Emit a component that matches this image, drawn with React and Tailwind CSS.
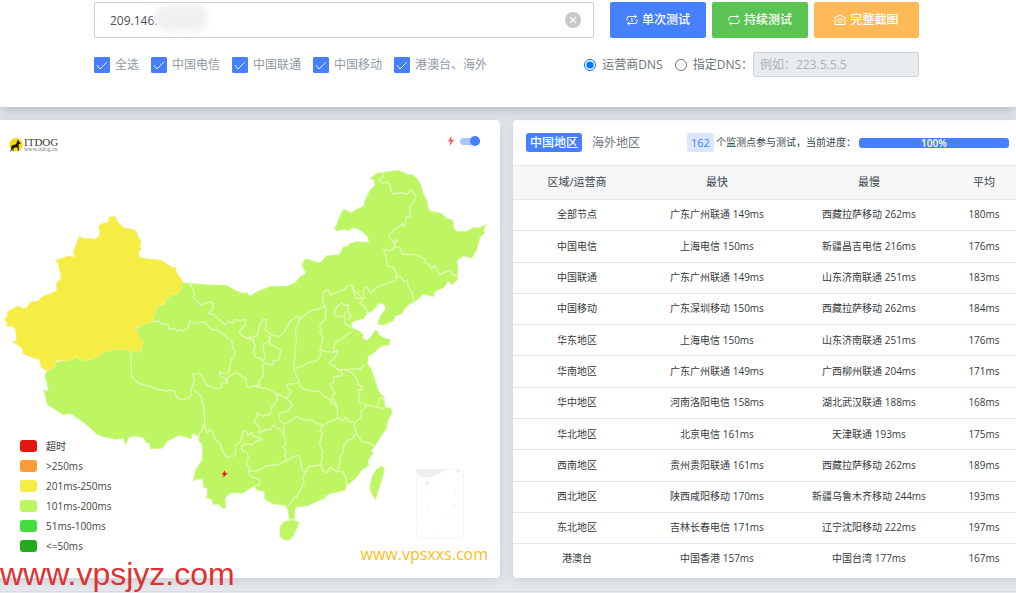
import React, { useState } from 'react';

const carriers = ['全选', '中国电信', '中国联通', '中国移动', '港澳台、海外'];

const legend = [
  { label: '超时', color: 'bg-[#e61610]' },
  { label: '>250ms', color: 'bg-[#f99b37]' },
  { label: '201ms-250ms', color: 'bg-[#f6ed44]' },
  { label: '101ms-200ms', color: 'bg-[#bef663]' },
  { label: '51ms-100ms', color: 'bg-[#42dd3f]' },
  { label: '<=50ms', color: 'bg-[#24aa1d]' },
];

const rows = [
  ['全部节点', '广东广州联通 149ms', '西藏拉萨移动 262ms', '180ms'],
  ['中国电信', '上海电信 150ms', '新疆昌吉电信 216ms', '176ms'],
  ['中国联通', '广东广州联通 149ms', '山东济南联通 251ms', '183ms'],
  ['中国移动', '广东深圳移动 150ms', '西藏拉萨移动 262ms', '184ms'],
  ['华东地区', '上海电信 150ms', '山东济南联通 251ms', '176ms'],
  ['华南地区', '广东广州联通 149ms', '广西柳州联通 204ms', '171ms'],
  ['华中地区', '河南洛阳电信 158ms', '湖北武汉联通 188ms', '168ms'],
  ['华北地区', '北京电信 161ms', '天津联通 193ms', '175ms'],
  ['西南地区', '贵州贵阳联通 161ms', '西藏拉萨移动 262ms', '189ms'],
  ['西北地区', '陕西咸阳移动 170ms', '新疆乌鲁木齐移动 244ms', '193ms'],
  ['东北地区', '吉林长春电信 171ms', '辽宁沈阳移动 222ms', '197ms'],
  ['港澳台', '中国香港 157ms', '中国台湾 177ms', '167ms'],
];

const RepeatIcon = ({ once }) => (
  <svg className="w-3 h-3" viewBox="0 0 24 24" fill="none" stroke="currentColor" strokeWidth="2" aria-hidden="true">
    <path d="M2 13V9a4 4 0 0 1 4-4h15M17 1l4 4-4 4M22 11v4a4 4 0 0 1-4 4H3M7 15l-4 4 4 4" />
    {once && <path d="M10 10l2-1v7" />}
  </svg>
);

const CameraIcon = () => (
  <svg className="w-3 h-3" viewBox="0 0 24 24" fill="none" stroke="currentColor" strokeWidth="2" aria-hidden="true">
    <path d="M2 6h5l2-3h6l2 3h5v15H2z" strokeLinejoin="round" />
    <circle cx="12" cy="13" r="4" />
  </svg>
);

const Bolt = ({ className }) => (
  <svg className={className} viewBox="0 0 12 20" fill="currentColor" aria-hidden="true">
    <path d="M7 0L0 11h5L3 20l9-12H7z" />
  </svg>
);

const Logo = () => (
  <div className="flex items-center gap-px">
    <svg className="w-[14px] h-[14px]" viewBox="0 0 42 42" aria-hidden="true">
      <circle cx="21" cy="20" r="20" fill="#fbd80e" />
      <path
        fill="#1c1a17"
        d="M25 5l2 4 2-5 1 7 5 3-1 3-5 1v9l1 11h-3l-2-10-9 1-3 3 1 8h-3l-1-9-4 9-2 1 3-15 3-4 11-3 3-7z"
      />
    </svg>
    <div className="flex flex-col font-['Liberation_Serif',serif] text-[#3b3630]">
      <span className="text-[11px] leading-[9px]">ITDOG</span>
      <span className="text-[6px] leading-[5px] text-[#777]">www.itdog.cn</span>
    </div>
  </div>
);

const ChinaMap = () => (
  <svg className="block w-full h-auto" viewBox="-30 360 1530 1374" role="img" aria-label="中国地图">
    <g fill="#bef663" stroke="#d3f89a" strokeWidth="2" strokeLinejoin="round">
      <path d="M551 848L572 850L630 855L675 855L683 858L700 868L728 880L742 878L745 885L752 887L775 873L812 859L862 858L885 848L900 830L918 820L906 797L908 790L916 776L958 788L966 783L980 767L1015 764L1023 755L1028 742L1044 738L1048 731L1068 725L1107 727L1103 710L1090 698L1072 685L1055 684L1045 693L1034 688L1010 693L1002 683L1010 677L1012 665L1030 628L1055 638L1070 628L1092 618L1095 600L1110 570L1125 555L1122 540L1110 536L1130 520L1195 511L1228 525L1236 523L1250 535L1262 553L1270 580L1280 600L1286 628L1292 634L1325 640L1340 655L1358 660L1362 685L1370 695L1400 694L1420 683L1440 683L1460 673L1450 690L1455 698L1440 712L1434 735L1430 750L1415 775L1390 767L1370 783L1374 800L1372 840L1355 855L1345 843L1332 862L1305 875L1300 890L1270 882L1245 905L1230 912L1213 927L1205 942L1185 948L1180 963L1150 975L1134 972L1136 960L1142 945L1155 930L1156 918L1146 910L1135 912L1115 935L1102 938L1092 955L1068 962L1054 968L1056 985L1078 992L1090 1005L1087 1015L1100 1022L1112 1010L1127 990L1133 993L1135 1003L1150 1013L1169 1018L1168 1035L1148 1037L1136 1045L1120 1060L1103 1070L1105 1078L1102 1090L1115 1110L1125 1140L1135 1172L1152 1192L1155 1222L1174 1225L1176 1240L1162 1265L1160 1285L1142 1310L1130 1330L1121 1345L1113 1352L1120 1358L1105 1380L1105 1397L1085 1410L1070 1432L1050 1450L1040 1455L1035 1470L1010 1477L985 1483L970 1497L945 1507L925 1517L887 1522L884 1535L884 1560L868 1560L864 1530L857 1517L820 1512L800 1502L794 1495L793 1475L770 1470L762 1458L735 1475L726 1480L708 1478L690 1480L675 1495L678 1525L668 1525L655 1512L640 1515L635 1498L620 1495L622 1465L610 1462L608 1435L580 1442L587 1408L607 1380L607 1335L595 1320L593 1308L577 1300L573 1318L558 1310L535 1307L500 1325L487 1345L452 1347L448 1330L438 1328L432 1315L410 1308L388 1310L377 1335L370 1315L345 1318L310 1310L290 1303L270 1283L245 1263L210 1240L190 1245L140 1213L137 1190L130 1170L145 1174L141 1148L134 1130L140 1112L160 1090L300 1050L380 1020L440 950L500 880Z" />
      <path d="M840 1610V1582L852 1565L880 1560L898 1567L888 1590L880 1608L865 1622L850 1618Z" />
      <path d="M1145 1398L1153 1405L1150 1425L1135 1470L1127 1500L1112 1475L1110 1455L1118 1425L1130 1408Z" />
      <path
        fill="#f6ed44"
        stroke="#f5f0a0"
        d="M327 650L350 650L347 657L355 668L372 684L390 686L405 691L412 700L416 715L424 722L420 737L424 746L416 757L418 770L430 775L483 780L515 801L526 802L530 817L551 848L541 860L545 870L528 883L517 881L495 903L493 914L472 917L466 937L457 966L430 974L405 983L413 998L415 1008L432 1027L422 1044L425 1059L408 1051L392 1056L380 1049L350 1048L312 1056L305 1065L262 1081L237 1080L228 1070L205 1083L172 1081L163 1097L155 1110L138 1112L122 1101L118 1078L98 1073L70 1061L65 1043L38 1027L50 1021L45 985L33 978L20 981L22 970L12 957L21 952L22 935L45 922L59 918L65 925L80 923L92 905L115 903L123 892L170 872L169 848L183 837L180 815L174 790L166 781L208 767L223 772L220 755L237 709L250 715L270 715L283 718L297 710L299 690L295 677L305 671L325 665Z"
      />
    </g>
    {/* province borders: west, centre and south */}
    <g transform="translate(390 810)" fill="none" stroke="#e2f8b4" strokeWidth="4" strokeLinejoin="round">
      <path d="M68 155L85 153L90 160L113 163L118 178L132 175L140 182L152 179L160 183L175 172L178 153L202 162L213 155L225 156L235 168L245 178L262 180L285 197L305 212L308 235L316 243L310 262L303 270L298 300L293 308L283 312L268 305L270 318L283 325L292 340" />
      <path d="M180 38L193 68L190 82L205 95L212 106L225 100L243 95L250 105L247 118L235 130L250 132L262 145L275 155L285 165L295 155L308 160L313 149L328 151L345 148L345 165L328 183L333 194L350 205L370 210L375 228L372 243L375 262L390 263L398 275L408 258L400 245L400 222L415 216L418 198" />
      <path d="M350 205L382 197L388 165L400 148L409 150L406 180L422 193L445 200L462 187L480 155L495 143L508 138L512 147L530 130L545 120L568 117L580 110L588 113L578 95L580 70L590 58L598 65L600 75L640 60L650 50L663 45L670 48L670 60L682 68L695 85" />
      <path d="M422 193L418 220L435 230L452 240L447 270L430 273L427 285L403 280L398 290L401 315L385 335L390 345L350 352L348 325L317 307L300 318L290 328L293 340L275 337L275 352L262 357L230 345L218 320L208 310L200 313L188 311L193 330L183 360L185 375L175 385L155 388L140 382L135 366L125 360L110 363L80 357L50 346L30 342L12 328L5 318L3 280L5 255L0 250" />
      <path d="M190 358L213 378L217 400L222 410L225 470L230 490L238 478L250 490L255 508L270 520L280 548L290 562L315 557L318 525L330 515L337 500L340 482L350 485L352 495L365 488L372 500L390 504L395 510L375 515L368 525L350 520L335 528L335 540L352 548L355 560L350 580L360 595L355 608L367 622L390 628L388 645L372 650" />
      <path d="M225 455L213 485L207 490L205 510" />
      <path d="M508 140L505 160L495 180L500 210L495 240L495 265L490 295L505 330L512 350L520 357L545 363L570 365L580 378L605 390L603 397L622 410L622 430L625 445" />
      <path d="M375 350L415 357L440 372L450 375L470 385L483 365L470 350L472 342L505 340" />
      <path d="M588 113L585 150L568 165L575 178L568 190L580 200L570 240L572 258L560 272L530 280L515 290L490 295" />
      <path d="M570 240L588 245L612 247L625 240L620 255L597 280L615 290L625 300L640 298L655 298L680 295L690 298L703 285" />
      <path d="M610 250L612 230L620 213L635 208L645 198L665 185" />
      <path d="M612 128L620 112L635 98L642 107L655 105L655 125L645 127L643 138L628 140L615 135ZM643 138L645 160L663 172M655 125L663 140L655 150" />
      <path d="M628 300L645 300L665 308L680 325L685 345L697 350L695 360L683 360L690 378L684 395L710 405L740 412L762 415M740 412L750 383L763 387" />
      <path d="M628 300L638 310L635 318L612 320L612 335L600 345L615 370L605 378L615 395L622 410" />
      <path d="M625 445L640 452L647 442L660 455L675 458L695 440L692 422L702 417L710 405" />
      <path d="M442 372L442 388L425 412L420 432L400 438L380 428L382 440L372 455L392 475L385 488L400 485L405 478L420 480L430 465L442 475L455 480L460 495" />
      <path d="M470 385L488 405L475 422L447 430L447 448L463 462L463 495M463 462L485 450L500 440L515 448L550 452L560 462L572 460L575 470L590 458L625 445" />
      <path d="M463 495L467 525L457 530L468 540L465 558L470 572L440 585L410 587L390 600L360 605M470 572L495 558L508 557L515 588L513 600L528 605" />
      <path d="M575 470L570 485L578 490L568 520L578 545L573 585M528 605L535 590L573 585L578 600L590 610L600 592L620 605L640 605L648 628L650 645" />
      <path d="M675 458L673 472L680 490L665 508L650 512L640 530L638 548L630 560L628 590L620 605M680 490L695 515L715 518L725 522L735 535" />
      <path d="M528 605L520 620L522 640L500 680L490 685L475 708M480 750L495 745" />
      <path d="M572 685L580 673L587 680L582 690Z" strokeWidth="2" />
    </g>
    {/* province borders: north-east */}
    <g transform="translate(750 330)" fill="none" stroke="#e2f8b4" strokeWidth="4" strokeLinejoin="round">
      <path d="M398 188L400 200L386 212L400 220L410 215L420 225L423 243L430 252L450 248L470 252L485 240L498 260L490 278L480 290L480 318L470 320L463 350L459 340L415 375L430 398L440 388L442 395L432 400L435 410L450 412L458 433L490 433L515 442L525 447L527 460L538 463L545 477L555 465L568 493L590 485L600 482L610 495L622 498" />
      <path d="M435 410L422 422L400 420L408 435L412 470L430 470L440 495L438 512L412 520L380 532L362 548L348 530L340 543L342 565L318 565L305 528" />
      <path d="M440 500L452 500L462 515L472 510L475 530L485 545L493 575M340 565L330 580L345 590L353 610" />
    </g>
    {/* South China Sea inset */}
    <g transform="translate(750 990)" fill="#eee">
      <rect x="500" y="418" width="140" height="207" fill="none" stroke="#f6f6f6" strokeWidth="3" />
      <path d="M500 418H592L555 438L532 443L512 440L500 427ZM616 419h14l-4 12zM526 456l14-4-4 14-10 2zM528 488l3 12h-3zM526 534l10-10 2 3zM513 562l5 12h-3zM585 574l10-18 2 3zM608 528l7-9v8zM614 482l3 0v14h-3zM620 452l4-12 2 3zM554 602l12-4-10 6zM630 440l8-8v4z" />
    </g>
    <path d="M674 1412L666 1424H672L670 1432L682 1420H676Z" fill="#e61610" stroke="#e61610" strokeWidth="1" />
  </svg>
);

const SearchPanel = () => {
  const [host, setHost] = useState('209.146.');
  const [dns, setDns] = useState('isp');

  return (
    <header className="relative bg-white pt-[2px] pb-[30px] pl-[94px] pr-[97px] shadow-[0_3px_12px_rgba(70,90,105,0.35)]">
      <div className="flex gap-4">
        <div className="relative flex-1">
          <input
            type="text"
            aria-label="IP"
            value={host}
            onChange={(e) => setHost(e.target.value)}
            className="w-full h-9 px-[15px] rounded-[2px] border border-[#c9cfd9] bg-white text-[#495057]"
          />
          <div className="absolute left-[60px] top-[3px] w-[54px] h-[26px] rounded-full bg-[#eff0f2] blur-[3px]" />
          <button type="button" aria-label="清除" onClick={() => setHost('')} className="absolute right-[13px] top-[10px]">
            <svg className="w-4 h-4" viewBox="0 0 16 16" aria-hidden="true">
              <circle cx="8" cy="8" r="8" fill="#c9c9c9" />
              <path d="M5 5l6 6M11 5l-6 6" stroke="#fff" strokeWidth="1.2" />
            </svg>
          </button>
        </div>
        <div className="flex gap-[6px] font-medium text-white">
          <button type="button" className="flex items-center justify-center gap-1 w-24 h-9 rounded-[2px] bg-[#4680ff]">
            <RepeatIcon once />
            单次测试
          </button>
          <button type="button" className="flex items-center justify-center gap-1 w-24 h-9 rounded-[2px] bg-[#5bc455]">
            <RepeatIcon />
            持续测试
          </button>
          <button type="button" className="flex items-center justify-center gap-1 w-[105px] h-9 rounded-[2px] bg-[#ffba57]">
            <CameraIcon />
            完整截图
          </button>
        </div>
      </div>

      <div className="mt-[14px] flex items-center justify-between">
        <div className="flex gap-3 text-[#8f99a3]">
          {carriers.map((name) => (
            <label key={name} className="flex items-center gap-[5px]">
              <span className="grid place-items-center">
                <input
                  type="checkbox"
                  defaultChecked
                  className="peer col-start-1 row-start-1 appearance-none w-4 h-4 rounded-[1px] border border-[#4680ff] checked:bg-[#4680ff]"
                />
                <svg
                  className="col-start-1 row-start-1 w-3 h-3 pointer-events-none invisible peer-checked:visible"
                  viewBox="0 0 12 12"
                  fill="none"
                  stroke="#e8efff"
                  aria-hidden="true"
                >
                  <path d="M1 6l3 4 7-7" />
                </svg>
              </span>
              {name}
            </label>
          ))}
        </div>
        <div className="flex items-center text-[#6c757d]">
          <label className="flex items-center gap-[6px] mr-3">
            <input
              type="radio"
              name="dns"
              checked={dns === 'isp'}
              onChange={() => setDns('isp')}
              className="w-3 h-3 accent-[#0075ff]"
            />
            运营商DNS
          </label>
          <label className="flex items-center gap-[6px]">
            <input
              type="radio"
              name="dns"
              checked={dns === 'custom'}
              onChange={() => setDns('custom')}
              className="w-3 h-3 accent-[#0075ff]"
            />
            指定DNS：
          </label>
          <input
            type="text"
            aria-label="指定DNS"
            placeholder="例如：223.5.5.5"
            disabled={dns === 'isp'}
            className="w-[166px] h-[25px] px-[6px] rounded-[2px] border border-[#ced4da] bg-[#e9ecef] placeholder:text-[#a9b1b9]"
          />
        </div>
      </div>
    </header>
  );
};

const MapPanel = () => (
  <section className="relative rounded bg-white shadow-[0_2px_12px_rgba(70,90,105,0.2)]">
    <ChinaMap />
    <div className="absolute left-[19px] top-[18px]">
      <Logo />
    </div>
    <label className="absolute right-5 top-[16px] flex items-center gap-[6px]">
      <Bolt className="w-[6px] h-[10px] text-[#ff5252]" />
      <span className="grid items-center">
        <input
          type="checkbox"
          role="switch"
          aria-label="闪电"
          defaultChecked
          className="peer col-start-1 row-start-1 appearance-none w-5 h-[7px] rounded-full bg-[#abc4ff]"
        />
        <span className="col-start-1 row-start-1 w-[10px] h-[10px] rounded-full bg-[#4680ff] pointer-events-none peer-checked:ml-[10px]" />
      </span>
    </label>
    <ul className="absolute left-[30px] bottom-[22px] text-[10px] leading-5 text-[#444]">
      {legend.map((item) => (
        <li key={item.label} className="flex items-center gap-[9px]">
          <span className={`w-[17px] h-3 rounded-[3px] ${item.color}`} />
          {item.label}
        </li>
      ))}
    </ul>
    <p className="absolute right-3 bottom-3 text-base text-[#fbbd21]">www.vpsxxs.com</p>
  </section>
);

const ResultPanel = () => (
  <section className="rounded bg-white shadow-[0_2px_12px_rgba(70,90,105,0.2)]">
    <div className="flex items-center h-[45px] pl-[13px] pr-[14px]">
      <button type="button" className="h-[19px] px-1 rounded-[3px] bg-[#4680ff] font-medium leading-[19px] text-white">
        中国地区
      </button>
      <button type="button" className="ml-[10px] text-[#6c757d]">
        海外地区
      </button>
      <span className="ml-[47px] px-1 rounded-[3px] bg-[#dae6ff] text-[11px] leading-[19px] text-[#4680ff]">162</span>
      <span className="ml-[2px] whitespace-nowrap text-[10px] text-[#37474f]">个监测点参与测试，当前进度：</span>
      <div
        role="progressbar"
        aria-valuenow={100}
        className="ml-auto w-[150px] h-[10px] rounded-[3px] bg-[#4680ff] text-center text-[10px] leading-[10px] font-semibold text-white"
      >
        100%
      </div>
    </div>
    <table className="w-full h-[409px] mb-1 table-fixed text-center text-[10px] text-[#373a3c]">
      <thead>
        <tr className="h-[34px] border-y border-[#e2e7ec] bg-[#f7f7f7] text-[11px] text-[#37474f]">
          <th className="w-[128px] font-normal">区域/运营商</th>
          <th className="font-normal">最快</th>
          <th className="font-normal">最慢</th>
          <th className="w-[78px] font-normal">平均</th>
        </tr>
      </thead>
      <tbody>
        {rows.map(([region, fastest, slowest, average]) => (
          <tr key={region} className="border-b border-[#e2e7ec] last:border-0">
            <td>{region}</td>
            <td>{fastest}</td>
            <td>{slowest}</td>
            <td>{average}</td>
          </tr>
        ))}
      </tbody>
    </table>
  </section>
);

const App = () => (
  <div className="relative min-h-screen overflow-hidden bg-[#e5e9ee] font-['Open_Sans','Noto_Sans_CJK_SC',sans-serif] text-xs">
    <SearchPanel />
    <main className="grid grid-cols-2 gap-[13px] mt-[13px] mb-[13px] -ml-[10px] -mr-[7px]">
      <MapPanel />
      <ResultPanel />
    </main>
    <div className="h-px bg-[#d8dce2]" />
    <p className="absolute left-0 bottom-0 font-['Liberation_Sans',sans-serif] text-[32px] leading-[37px] text-[#e03131]">
      www.vpsjyz.com
    </p>
  </div>
);

export default App;
